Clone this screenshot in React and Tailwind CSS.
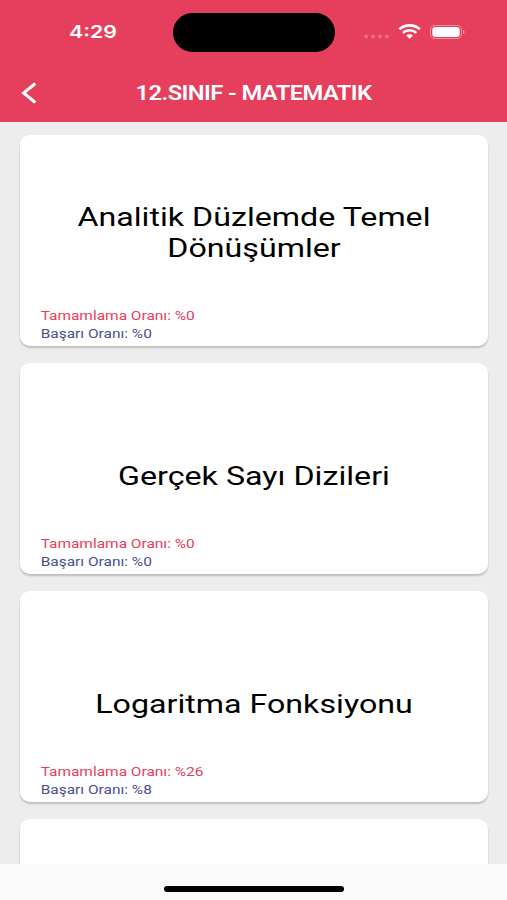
const topics = [
  { title: "Analitik Düzlemde Temel Dönüşümler", completion: 0, success: 0 },
  { title: "Gerçek Sayı Dizileri", completion: 0, success: 0 },
  { title: "Logaritma Fonksiyonu", completion: 26, success: 8 },
];

function StatusBar() {
  return (
    <div className="flex h-16 items-center text-white">
      <div className="w-[173px] pt-[2px] pl-[69px]">
        <span className="inline-block origin-left scale-x-[1.22] font-['Inter',sans-serif] text-[17.5px] leading-none font-semibold">
          4:29
        </span>
      </div>
      <div className="h-[39px] w-[162px] rounded-full bg-black" />
      {/* Signal, wifi and battery */}
      <svg className="ml-[28px]" width="104" height="20" viewBox="0 0 104 20" fill="none">
        <g fill="#fff" fillOpacity="0.25">
          <circle cx="3.2" cy="14.5" r="1.9" />
          <circle cx="10" cy="14.5" r="1.9" />
          <circle cx="17" cy="14.5" r="1.9" />
          <circle cx="23.8" cy="14.5" r="1.9" />
        </g>
        <g stroke="#fff" strokeWidth="2.6">
          <path d="M36.3 7.3C42 2.1 51.2 2.1 56.9 7.3" />
          <path d="M39.9 10.9C43.7 7.4 49.5 7.4 53.3 10.9" />
        </g>
        <path d="M43.2 13.4C45.2 11.7 48 11.7 50 13.4L46.6 16.7Z" fill="#fff" />
        <rect x="67.5" y="3.5" width="31" height="13" rx="4.2" stroke="#fff" strokeOpacity="0.4" />
        <rect x="69.3" y="5.1" width="27.4" height="9.8" rx="3" fill="#fff" />
        <path d="M100 8V12.2C102 11.5 102 8.7 100 8Z" fill="#fff" fillOpacity="0.45" />
      </svg>
    </div>
  );
}

function Header() {
  return (
    <header className="h-[122px] shrink-0 bg-[#e63e5d]">
      <StatusBar />
      <div className="flex h-[58px] items-center text-white">
        <button className="w-[68px] pl-[21px]" aria-label="Geri">
          <svg width="17" height="22" viewBox="0 0 17 22" fill="none">
            <path d="M14.3 1.5L2.6 11L14.3 20.5" stroke="currentColor" strokeWidth="3" />
          </svg>
        </button>
        <h1 className="flex-1 scale-x-[1.22] pt-[2px] text-center text-[19.5px] leading-none font-semibold tracking-[-0.5px] whitespace-nowrap">
          12.SINIF - MATEMATIK
        </h1>
        <div className="w-[68px]" />
      </div>
    </header>
  );
}

function TopicCard({ topic }) {
  return (
    <div className="flex h-[211px] shrink-0 flex-col rounded-[10px] bg-white pb-[3px] shadow-[0_2px_2px_rgba(0,0,0,0.2)]">
      <div className="flex flex-1 items-end justify-center pb-11">
        <h2 className="w-[310px] scale-x-[1.22] text-center text-[26.4px] leading-[30.5px] text-black">
          {topic.title}
        </h2>
      </div>
      <div className="flex origin-left scale-x-[1.18] flex-col pl-[17.5px] text-[13.1px] leading-[18px]">
        <span className="text-[#e63e5d]">Tamamlama Oranı: %{topic.completion}</span>
        <span className="text-[#4a4f94]">Başarı Oranı: %{topic.success}</span>
      </div>
    </div>
  );
}

export default function App() {
  return (
    <div className="flex h-[900px] w-[507px] flex-col overflow-hidden bg-[#ededed] font-['Roboto',sans-serif]">
      <Header />
      <main className="flex min-h-0 flex-1 flex-col gap-[17px] overflow-hidden px-5 pt-[13px] pr-[19px]">
        {topics.map((topic) => (
          <TopicCard key={topic.title} topic={topic} />
        ))}
        {/* Top of the next card */}
        <div className="h-[211px] shrink-0 rounded-[10px] bg-white shadow-[0_2px_2px_rgba(0,0,0,0.2)]" />
      </main>
      {/* Home indicator */}
      <footer className="flex h-9 shrink-0 justify-center bg-[#fafafa] pt-[22px]">
        <div className="ml-px h-[6px] w-[180px] rounded-full bg-black" />
      </footer>
    </div>
  );
}
